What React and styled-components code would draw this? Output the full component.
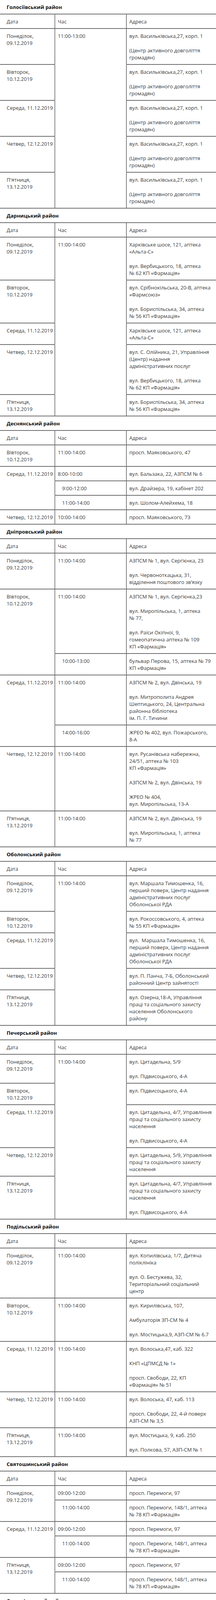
import React from 'react';
import styled, { createGlobalStyle } from 'styled-components';

const GlobalStyle = createGlobalStyle`
  html, body {
    margin: 0;
    padding: 0;
    background: #fff;
  }
  body {
    font-family: "Open Sans", "Noto Sans", sans-serif;
    font-size: 13px;
    line-height: 18px;
    color: #3a3a3a;
  }
`;

const Table = styled.table`
  width: 100%;
  border-collapse: collapse;
  table-layout: fixed;
  font-family: "Open Sans", "Noto Sans", sans-serif;
  font-size: 13px;
  line-height: 18px;
  color: #3a3a3a;
`;

const Cell = styled.td`
  vertical-align: top;
  padding: 9px 7px 8px;
  font-size: 13px;
  line-height: 18px;
  border-left: 1px solid #111;
  border-right: 1px solid #111;
  border-top: 2px solid #6e6e6e;
  border-bottom: 2px solid #6e6e6e;
  white-space: pre;
  &:first-child {
    border-left: none;
  }
  &:last-child {
    border-right: none;
  }
`;

const Heading = styled(Cell)`
  padding-left: 17px;
  font-weight: 700;
  color: #111;
  border-left: none;
  border-right: none;
  border-top: none;
`;

const DateCell = styled(Cell)`
  padding-left: 17px;
`;

const TimeCell = styled(Cell)`
  padding-left: ${(p) => (p.$indent ? '18px' : '7px')};
`;

const Para = styled.p`
  margin: 0;
  font-size: 13px;
  line-height: 18px;
  & + & {
    margin-top: 19px;
  }
`;

const MON = 'Понеділок,\n09.12.2019';
const TUE = 'Вівторок,\n10.12.2019';
const WED = 'Середа, 11.12.2019';
const THU = 'Четвер, 12.12.2019';
const FRI = 'П’ятниця,\n13.12.2019';

const VAS = ['вул. Васильківська,27, корп. 1', '(Центр активного довголіття\nгромадян)'];
const PEREM = 'просп. Перемоги, 148/1, аптека\n№ 78 КП «Фармація»';
const GUZAR = ['вул. Солом’янська, 17', 'просп. Любомира Гузара, 3\n(просп. Комарова, 3),\nМедмістечко'];
const TSYT47 = 'вул. Цитадельна, 4/7, Управління\nпраці та соціального захисту\nнаселення';
const PIDV = 'вул. Підвисоцького, 4-А';
const MARSH = 'перший поверх, Центр надання\nадміністративних послуг\nОболонської РДА';

const sections = [
  {
    title: 'Голосіївський район',
    rows: [
      { date: MON, time: '11:00-13:00', ts: 5, addr: VAS },
      { date: TUE, addr: VAS },
      { date: WED, addr: VAS },
      { date: THU, addr: VAS },
      { date: 'П\'ятниця,\n13.12.2019', addr: VAS },
    ],
  },
  {
    title: 'Дарницький район',
    rows: [
      {
        date: MON,
        time: '11:00-14:00',
        ts: 5,
        addr: ['Харківське шосе, 121, аптека\n«Альта-С»', 'вул. Вербицького, 18, аптека\n№ 62 КП «Фармація»'],
      },
      {
        date: TUE,
        addr: ['вул. Срібнокільська, 20-В, аптека\n«Фармсоюз»', 'вул. Бориспільська, 34, аптека\n№ 56 КП «Фармація»'],
      },
      { date: WED, addr: ['Харківське шосе, 121, аптека\n«Альта-С»'] },
      {
        date: THU,
        addr: [
          'вул. С. Олійника, 21, Управління\n(Центр) надання\nадміністративних послуг',
          'вул. Вербицького, 18, аптека\n№ 62 КП «Фармація»',
        ],
      },
      { date: FRI, addr: ['вул. Бориспільська, 34, аптека\n№ 56 КП «Фармація»'] },
    ],
  },
  {
    title: 'Деснянський район',
    rows: [
      { date: TUE, time: '11:00-14:00', addr: ['просп. Маяковського, 47'] },
      { date: WED, ds: 3, time: '8:00-10:00', addr: ['вул. Бальзака, 22, АЗПСМ № 6'] },
      { time: '9:00-12:00', indent: true, addr: ['вул. Драйзера, 19, кабінет 202'] },
      { time: '11:00-14:00', indent: true, addr: ['вул. Шолом-Алейхема, 18'] },
      { date: THU, time: '10:00-14:00', addr: ['просп. Маяковського, 73'] },
    ],
  },
  {
    title: 'Дніпровський район',
    rows: [
      {
        date: MON,
        time: '11:00-14:00',
        addr: ['АЗПСМ № 1, вул. Сергієнка, 23', 'вул. Червоноткацька, 31,\nвідділення поштового зв’язку'],
      },
      {
        date: TUE,
        ds: 2,
        time: '11:00-14:00',
        addr: [
          'АЗПСМ № 1, вул. Сергієнка,23',
          'вул. Миропільська, 1, аптека\n№ 77,',
          'вул. Раїси Окіпної, 9,\nгомеопатична аптека № 109\nКП «Фармація»',
        ],
      },
      { time: '10:00-13:00', indent: true, addr: ['бульвар Перова, 15, аптека № 79\nКП «Фармація»'] },
      {
        date: WED,
        ds: 2,
        time: '11:00-14:00',
        addr: [
          'АЗПСМ № 2, вул. Двінська, 19',
          'вул. Митрополита Андрея\nШептицького, 24, Центральна\nрайонна бібліотека\nім. П. Г. Тичини',
        ],
      },
      { time: '14:00-16:00', indent: true, addr: ['ЖРЕО № 402, вул. Пожарського,\n8-А'] },
      {
        date: THU,
        time: '11:00-14:00',
        addr: [
          'вул. Русанівська набережна,\n24/51, аптека № 103\nКП «Фармація»',
          'АЗПСМ № 2, вул. Двінська, 19',
          'ЖРЕО № 404,\nвул. Миропільська, 13-А',
        ],
      },
      {
        date: FRI,
        time: '11:00-14:00',
        addr: ['АЗПСМ № 2, вул. Двінська, 19', 'вул. Миропільська, 1, аптека\n№ 77'],
      },
    ],
  },
  {
    title: 'Оболонський район',
    rows: [
      { date: MON, time: '11:00-14:00', ts: 5, addr: ['вул. Маршала Тимошенка, 16,\n' + MARSH] },
      { date: TUE, addr: ['вул. Рокоссовського, 4, аптека\n№ 55 КП «Фармація»'] },
      { date: WED, addr: ['вул.  Маршала Тимошенка, 16,\n' + MARSH] },
      { date: THU, addr: ['вул. П. Панча, 7-Б, Оболонський\nрайонний Центр зайнятості'] },
      {
        date: FRI,
        addr: ['вул. Озерна,18-А, Управління\nпраці та соціального захисту\nнаселення Оболонського\nрайону'],
      },
    ],
  },
  {
    title: 'Печерський район',
    rows: [
      { date: MON, time: '11:00-14:00', ts: 5, addr: ['вул. Цитадельна, 5/9', PIDV] },
      { date: TUE, addr: [PIDV] },
      { date: WED, addr: [TSYT47, PIDV] },
      { date: THU, addr: ['вул. Цитадельна, 5/9, Управління\nпраці та соціального захисту\nнаселення'] },
      { date: FRI, addr: [TSYT47, PIDV] },
    ],
  },
  {
    title: 'Подільський район',
    rows: [
      {
        date: MON,
        time: '11:00-14:00',
        addr: ['вул. Копилівська, 1/7, Дитяча\nполіклініка', 'вул. О. Бестужева, 32,\nТериторіальний соціальний\nцентр'],
      },
      {
        date: TUE,
        time: '11:00-14:00',
        addr: ['вул. Кирилівська, 107,', 'Амбулаторія ЗП-СМ № 4', 'вул. Мостицька,9, АЗП-СМ № 6.7'],
      },
      {
        date: WED,
        time: '11:00-14:00',
        addr: ['вул. Волоська,47, каб. 322', 'КНП «ЦПМСД № 1»', 'просп. Свободи, 22, КП\n«Фармація» № 51'],
      },
      {
        date: THU,
        time: '11:00-14:00',
        addr: ['вул. Волоська, 47, каб. 113', 'просп. Свободи, 22, 4-й поверх\nАЗП-СМ № 3,5'],
      },
      {
        date: FRI,
        time: '11:00-14:00',
        addr: ['вул. Мостицька, 9, каб. 250', 'вул. Полкова, 57, АЗП-СМ № 1'],
      },
    ],
  },
  {
    title: 'Святошинський район',
    rows: [
      { date: MON, ds: 2, time: '09:00-12:00', addr: ['просп. Перемоги, 97'] },
      { time: '11:00-14:00', indent: true, addr: [PEREM] },
      { date: WED, ds: 2, time: '09:00-12:00', addr: ['просп. Перемоги, 97'] },
      { time: '11:00-14:00', indent: true, addr: [PEREM] },
      { date: FRI, ds: 2, time: '09:00-12:00', addr: ['просп. Перемоги, 97'] },
      { time: '11:00-14:00', indent: true, addr: [PEREM] },
    ],
  },
  {
    title: 'Солом\'янський район',
    rows: [
      { date: MON, time: '11:00-14:00', ts: 5, addr: GUZAR },
      {
        date: TUE,
        addr: [
          'просп. Повітрофлотський, 40,\nУправління праці та\nсоціального захисту\nСолом’янської РДА',
          'б-р В. Гавела, 83-А,\nТериторіальний центр\nсоціального обслуговування\nСолом’янського району',
        ],
      },
      {
        date: WED,
        addr: ['вул. Липківського, 27/5, аптека\nКП № 17', 'просп. Перемоги, 45, аптека КП\n№ 36'],
      },
      { date: THU, addr: GUZAR },
      { date: FRI, addr: ['просп. Повітрофлотський, 41,\nСолом’янська РДА'] },
    ],
  },
  {
    title: 'Шевченківський район',
    rows: [
      {
        date: MON,
        time: '10:00-13:00',
        addr: ['вул. Д. Щербаківського, 60,\nаптека № 130 КП «Фармація)', 'КНП ЦПМСД № 3'],
      },
      {
        date: TUE,
        time: '10:00-13:00',
        addr: ['вул. Б. Хмельницького, 24,\nШевченківська РДА, КНП\nЦПМСД № 1'],
      },
      {
        date: WED,
        time: '10:00-13:00',
        addr: ['вул. Січових Стрільців, 10, аптека\n№ 7 КП «Фармація»', 'КНП ЦПМСД № 2'],
      },
      {
        date: THU,
        time: '10:00-13:00',
        addr: [
          'вул. Б. Хмельницького, 24',
          '(Шевченківська районна в місті\nКиєві державна адміністрація),\nКНП ЦПМСД № 3',
        ],
      },
      {
        date: FRI,
        time: '10:00-13:00',
        addr: ['вул. Ісаакяна, 2, аптека № 90\nКП «Фармація», КНП ЦПМСД № 1'],
      },
    ],
  },
];

const Section = ({ title, rows }) => (
  <>
    <tr>
      <Heading colSpan={3}>{title}</Heading>
    </tr>
    <tr>
      <DateCell>Дата</DateCell>
      <TimeCell>Час</TimeCell>
      <Cell>Адреса</Cell>
    </tr>
    {rows.map((r, i) => (
      <tr key={i}>
        {r.date && <DateCell rowSpan={r.ds || 1}>{r.date}</DateCell>}
        {r.time && (
          <TimeCell rowSpan={r.ts || 1} $indent={r.indent}>
            {r.time}
          </TimeCell>
        )}
        <Cell>
          {r.addr.map((p, j) => (
            <Para key={j}>{p}</Para>
          ))}
        </Cell>
      </tr>
    ))}
  </>
);

const App = () => (
  <>
    <GlobalStyle />
    <Table>
      <colgroup>
        <col style={{ width: '25.4%' }} />
        <col style={{ width: '33.1%' }} />
        <col />
      </colgroup>
      <tbody>
        {sections.map((s) => (
          <Section key={s.title} {...s} />
        ))}
      </tbody>
    </Table>
  </>
);

export default App;
